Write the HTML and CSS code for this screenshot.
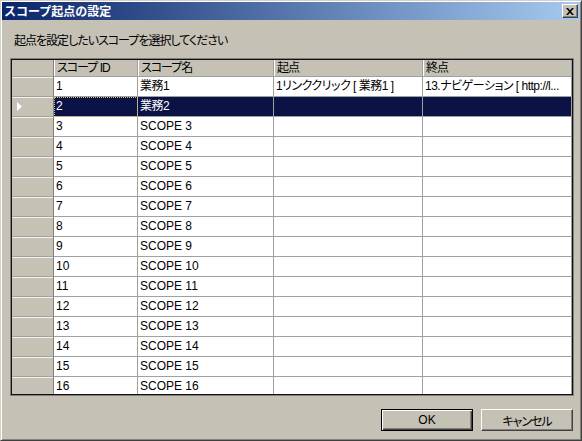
FILE: index.html
```html
<!DOCTYPE html>
<html lang="ja">
<head>
<meta charset="utf-8">
<title>スコープ起点の設定</title>
<link rel="stylesheet" href="styles.css">
</head>
<body>
<div class="window">
  <div class="titlebar">
    <span class="title">スコープ起点の設定</span>
    <button class="close" aria-label="閉じる"><svg width="8" height="7" viewBox="0 0 8 7"><path d="M0 0h2l2 2.2L6 0h2L5 3.5 8 7H6L4 4.8 2 7H0l3-3.5z" fill="#000"/></svg></button>
  </div>
  <div class="content">
    <div class="prompt">起点を設定したいスコープを選択してください</div>
    <div class="grid">
      <div class="grid-inner">
        <div class="row head">
          <div class="cell rh"></div>
          <div class="cell ja">スコープ ID</div>
          <div class="cell ja">スコープ名</div>
          <div class="cell ja">起点</div>
          <div class="cell ja">終点</div>
        </div>
        <div class="row">
          <div class="cell rh"></div>
          <div class="cell">1</div>
          <div class="cell mix">業務1</div>
          <div class="cell mix">1リンククリック [ 業務1 ]</div>
          <div class="cell mix">13.ナビゲーション [ http://l...</div>
        </div>
        <div class="row selected">
          <div class="cell rh"><svg class="arrow" width="5" height="9" viewBox="0 0 5 9"><path d="M0 0l5 4.5L0 9z" fill="#fff"/></svg></div>
          <div class="cell focus">2</div>
          <div class="cell mix">業務2</div>
          <div class="cell"></div>
          <div class="cell"></div>
        </div>
        <div class="row"><div class="cell rh"></div><div class="cell">3</div><div class="cell">SCOPE 3</div><div class="cell"></div><div class="cell"></div></div>
        <div class="row"><div class="cell rh"></div><div class="cell">4</div><div class="cell">SCOPE 4</div><div class="cell"></div><div class="cell"></div></div>
        <div class="row"><div class="cell rh"></div><div class="cell">5</div><div class="cell">SCOPE 5</div><div class="cell"></div><div class="cell"></div></div>
        <div class="row"><div class="cell rh"></div><div class="cell">6</div><div class="cell">SCOPE 6</div><div class="cell"></div><div class="cell"></div></div>
        <div class="row"><div class="cell rh"></div><div class="cell">7</div><div class="cell">SCOPE 7</div><div class="cell"></div><div class="cell"></div></div>
        <div class="row"><div class="cell rh"></div><div class="cell">8</div><div class="cell">SCOPE 8</div><div class="cell"></div><div class="cell"></div></div>
        <div class="row"><div class="cell rh"></div><div class="cell">9</div><div class="cell">SCOPE 9</div><div class="cell"></div><div class="cell"></div></div>
        <div class="row"><div class="cell rh"></div><div class="cell">10</div><div class="cell">SCOPE 10</div><div class="cell"></div><div class="cell"></div></div>
        <div class="row"><div class="cell rh"></div><div class="cell">11</div><div class="cell">SCOPE 11</div><div class="cell"></div><div class="cell"></div></div>
        <div class="row"><div class="cell rh"></div><div class="cell">12</div><div class="cell">SCOPE 12</div><div class="cell"></div><div class="cell"></div></div>
        <div class="row"><div class="cell rh"></div><div class="cell">13</div><div class="cell">SCOPE 13</div><div class="cell"></div><div class="cell"></div></div>
        <div class="row"><div class="cell rh"></div><div class="cell">14</div><div class="cell">SCOPE 14</div><div class="cell"></div><div class="cell"></div></div>
        <div class="row"><div class="cell rh"></div><div class="cell">15</div><div class="cell">SCOPE 15</div><div class="cell"></div><div class="cell"></div></div>
        <div class="row"><div class="cell rh"></div><div class="cell">16</div><div class="cell">SCOPE 16</div><div class="cell"></div><div class="cell"></div></div>
      </div>
    </div>
    <div class="buttons">
      <button class="btn default">OK</button>
      <button class="btn ja">キャンセル</button>
    </div>
  </div>
</div>
</body>
</html>
```

FILE: styles.css
```css
* { box-sizing: border-box; }

html, body {
  margin: 0;
  padding: 0;
  background: #c5c1b5;
}

body {
  font-family: "Liberation Sans", "Noto Sans CJK JP", sans-serif;
  font-size: 12px;
  color: #000;
  font-feature-settings: "palt";
}

.window {
  width: 582px;
  height: 441px;
  background: #c5c1b5;
  border-style: solid;
  border-width: 1px;
  border-color: #d4d0c8 #404040 #404040 #d4d0c8;
  box-shadow: inset 1px 1px #fff, inset -1px -1px #808080;
  padding: 1px;
  display: flex;
  flex-direction: column;
}

.titlebar {
  height: 18px;
  flex: none;
  display: flex;
  align-items: center;
  padding: 0 2px 0 2px;
  background: linear-gradient(to right, #0a246a, #a6caf0);
  color: #fff;
}

.title {
  font-family: "Noto Sans CJK JP", sans-serif;
  font-weight: bold;
  font-size: 12px;
  font-feature-settings: normal;
  line-height: 14px;
}

.close {
  margin-left: auto;
  width: 16px;
  height: 14px;
  padding: 0;
  background: #c5c1b5;
  border-style: solid;
  border-width: 1px;
  border-color: #fff #404040 #404040 #fff;
  box-shadow: inset -1px -1px #808080;
  display: flex;
  align-items: center;
  justify-content: center;
}

.content {
  flex: 1;
  padding: 0 6px 0 8px;
  display: flex;
  flex-direction: column;
}

.prompt {
  margin: 14px 0 0 4px;
  line-height: 14px;
  height: 14px;
  white-space: nowrap;
  letter-spacing: -1px;
}

.ja {
  letter-spacing: -1px;
}

.mix {
  letter-spacing: -0.5px;
}

.grid {
  margin-top: 10px;
  height: 338px;
  border: 1px solid #808080;
}

.grid-inner {
  height: 100%;
  border: 1px solid #101010;
  overflow: hidden;
  background: #c5c1b5;
}

.row {
  display: grid;
  grid-template-columns: 42px 84px 136px 149px 149px;
  height: 20px;
}

.cell {
  background: #fff;
  border-right: 1px solid #a0a0a0;
  border-bottom: 1px solid #a0a0a0;
  padding-left: 2px;
  line-height: 19px;
  white-space: nowrap;
  overflow: hidden;
}

.row.head {
  height: 17px;
}

.row.head .cell {
  background: #c5c1b5;
  line-height: 16px;
  padding-left: 3px;
  box-shadow: inset 1px 0 #fff;
}

.cell.rh {
  background: #c5c1b5;
  border-right: 1px solid #808080;
  box-shadow: inset 0 1px #f4f2ec;
  display: flex;
  align-items: center;
  padding-left: 5px;
}

.row.head .cell.rh {
  box-shadow: none;
}

.row.selected .cell {
  background: #0b1246;
  color: #fff;
}

.row.selected .cell.rh {
  background: #c5c1b5;
}

.row.selected .cell.focus {
  outline: 1px dotted #d8c070;
  outline-offset: -1px;
}

.arrow {
  display: block;
}

.buttons {
  margin-top: 13px;
  margin-right: 1px;
  display: flex;
  justify-content: flex-end;
  gap: 8px;
}

.btn {
  width: 92px;
  height: 22px;
  padding: 0;
  background: #c5c1b5;
  font-family: "Liberation Sans", "Noto Sans CJK JP", sans-serif;
  font-size: 12px;
  font-feature-settings: "palt";
  color: #000;
  border-style: solid;
  border-width: 1px;
  border-color: #fff #404040 #404040 #fff;
  box-shadow: inset -1px -1px #808080;
}

.btn.default {
  border: 1px solid #000;
  box-shadow: inset 1px 1px #fff, inset -1px -1px #404040, inset -2px -2px #808080;
}
```
